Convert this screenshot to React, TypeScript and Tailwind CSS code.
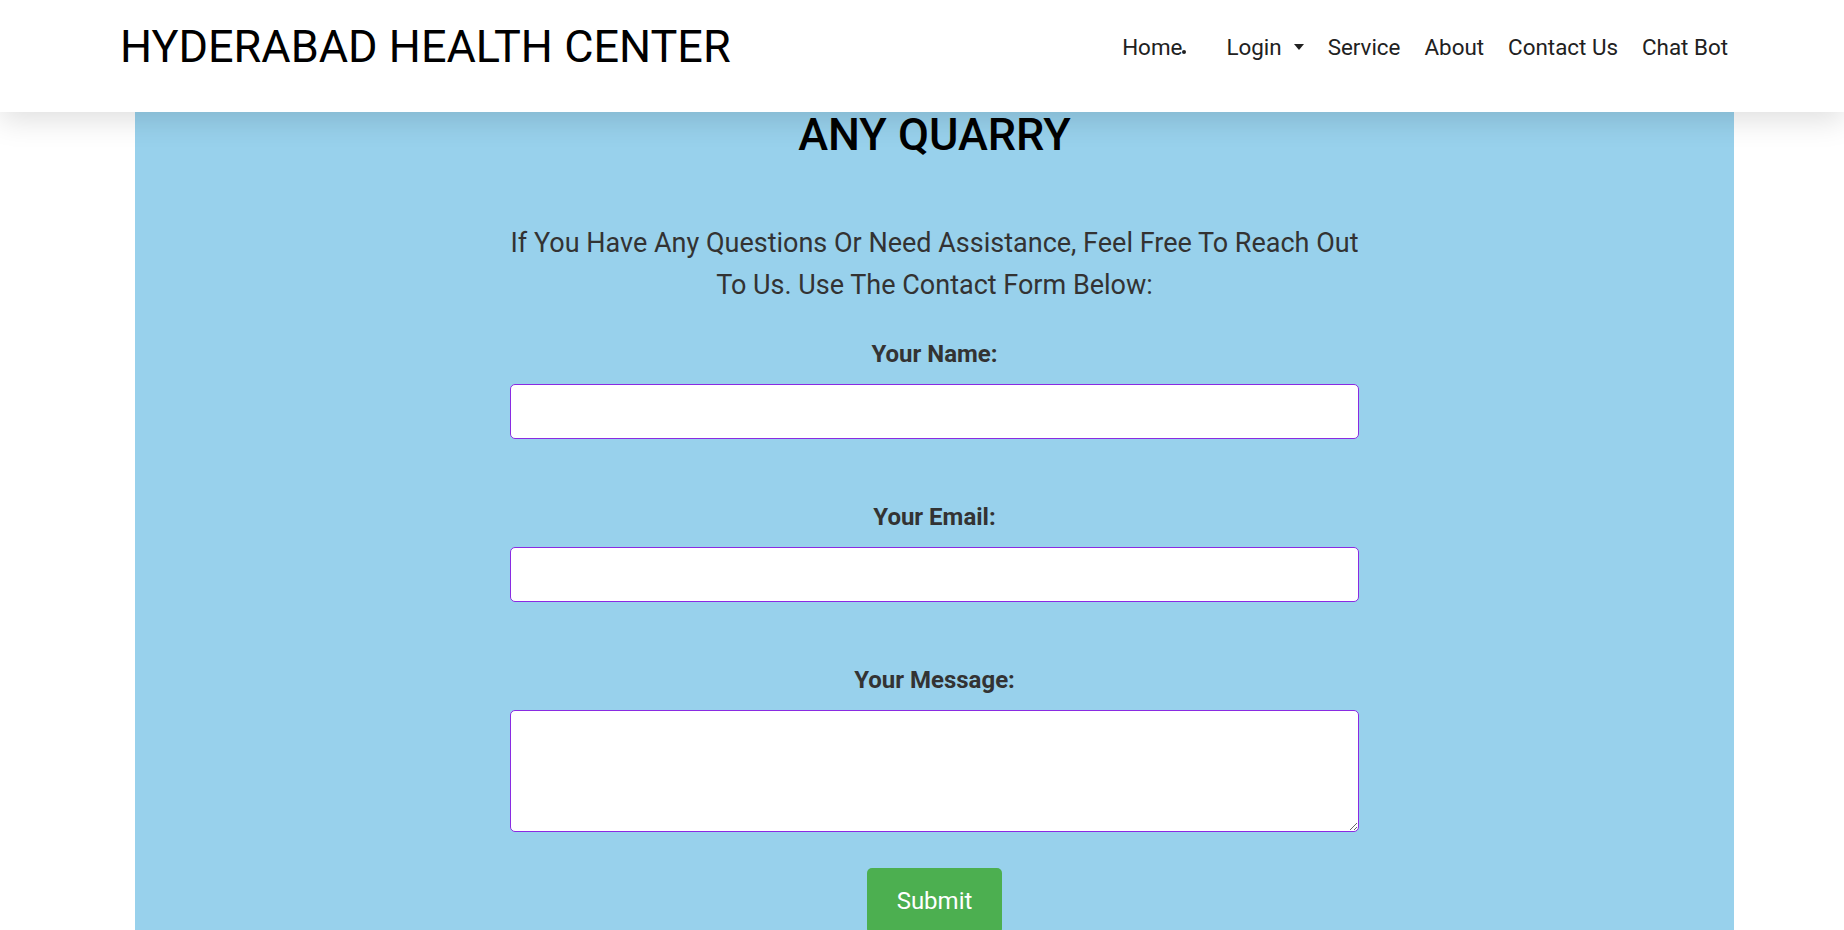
const navItems = ["Service", "About", "Contact Us", "Chat Bot"]

const Field = ({ label, tall }: { label: string; tall?: boolean }) => {
  return (
    <div className="flex flex-col">
      <label className="text-center text-[24px] leading-[28px] font-bold text-[#333] mb-4">{label}</label>
      {tall ? (
        <textarea className="w-full h-[122px] bg-white border border-[#8a2be2] rounded-[5px] outline-none" />
      ) : (
        <input type="text" className="w-full h-[55px] bg-white border border-[#8a2be2] rounded-[5px] outline-none" />
      )}
    </div>
  )
}

const App = () => {
  return (
    <div className="min-h-screen bg-white font-['Roboto',sans-serif]">
      <header className="relative z-10 h-[112px] bg-white flex items-start justify-between pl-[120px] pr-[105px] shadow-[0_8px_28px_rgba(0,0,0,0.13)]">
        <h1 className="pt-[25px] text-[45px] leading-[44px] font-normal text-black">HYDERABAD HEALTH CENTER</h1>
        <nav className="pt-[36px] flex items-start text-[22.4px] leading-[22px] text-[#212121]">
          <a className="px-3 flex items-end">
            Home<span className="mb-[4px] w-[4px] h-[4px] rounded-full bg-[#212121]"></span>
          </a>
          <a className="ml-[16px] pl-3 pr-[12px] flex items-center">
            Login
            <span className="ml-[12px] w-0 h-0 border-x-[5px] border-x-transparent border-t-[6px] border-t-[#212121]"></span>
          </a>
          {navItems.map((n) => (
            <a key={n} className="px-3 last:pr-[11px]">{n}</a>
          ))}
        </nav>
      </header>

      <main className="ml-[135px] w-[1599px] bg-[#98d1ec] pb-16">
        <h2 className="text-center text-[45px] leading-[45px] font-medium text-black">ANY QUARRY</h2>
        <p className="mx-auto mt-[65px] w-[872px] text-center text-[27px] leading-[42px] text-[#333]">
          If You Have Any Questions Or Need Assistance, Feel Free To Reach Out To Us. Use The Contact Form Below:
        </p>
        <form className="mx-auto mt-[34px] w-[849px] flex flex-col gap-[64px]">
          <Field label="Your Name:" />
          <Field label="Your Email:" />
          <Field label="Your Message:" tall />
        </form>
        <div className="mt-[36px] flex justify-center">
          <button className="bg-[#4caf50] text-white text-[24px] leading-[36px] px-[30px] py-[15px] rounded-[5px]">Submit</button>
        </div>
      </main>
    </div>
  )
}

export default App
